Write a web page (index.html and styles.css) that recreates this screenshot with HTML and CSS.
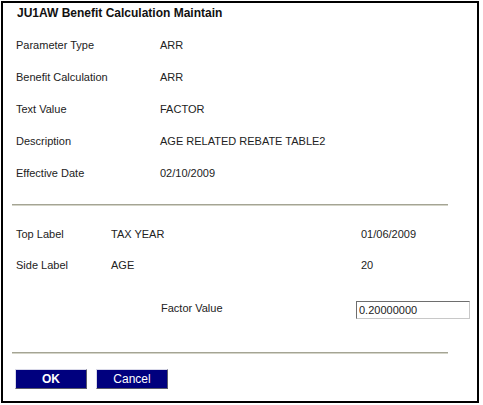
FILE: index.html
```html
<!DOCTYPE html>
<html lang="en">
<head>
  <title>JU1AW Benefit Calculation Maintain</title>
  <link rel="stylesheet" href="styles.css">
</head>
<body>
    <div class="frame">
        <div class="title">JU1AW Benefit Calculation Maintain</div>

        <div class="details">
            <div class="row"><span class="label">Parameter Type</span><span>ARR</span></div>
            <div class="row"><span class="label">Benefit Calculation</span><span>ARR</span></div>
            <div class="row"><span class="label">Text Value</span><span>FACTOR</span></div>
            <div class="row"><span class="label">Description</span><span>AGE RELATED REBATE TABLE2</span></div>
            <div class="row"><span class="label">Effective Date</span><span>02/10/2009</span></div>
        </div>

        <div class="divider"></div>

        <div class="axes">
            <div class="axis-row"><span class="axis-label">Top Label</span><span class="axis-name">TAX YEAR</span><span>01/06/2009</span></div>
            <div class="axis-row"><span class="axis-label">Side Label</span><span class="axis-name">AGE</span><span>20</span></div>
        </div>

        <div class="factor-row">
            <span class="factor-label">Factor Value</span>
            <input class="factor-input" value="0.20000000"/>
        </div>

        <div class="divider lower"></div>

        <div class="buttons">
            <button class="btn btn-ok">OK</button>
            <button class="btn">Cancel</button>
        </div>
    </div>
</body>
</html>
```

FILE: styles.css
```css
body {
    margin: 0;
    font-family: "Liberation Sans", Arial, sans-serif;
    font-size: 11px;
    color: #222;
    background: #fff;
}
.frame {
    box-sizing: border-box;
    width: 478px;
    height: 402px;
    margin: 1px;
    border: 2px solid #000;
}
.title {
    font-weight: bold;
    font-size: 12px;
    line-height: 20px;
    height: 20px;
    padding-left: 14px;
    color: #111;
}
.details {
    padding-left: 13px;
    margin-top: 6px;
}
.row {
    display: flex;
    align-items: center;
    height: 32px;
}
.label {
    width: 144px;
}
.divider {
    margin: 15px 29px 0 9px;
    height: 1px;
    border-top: 1px solid #a4a494;
    background: #d4d4c8;
}
.axes {
    padding-left: 13px;
    margin-top: 12px;
}
.axis-row {
    display: flex;
    align-items: center;
    height: 31px;
}
.axis-label {
    width: 95px;
}
.axis-name {
    width: 250px;
}
.factor-row {
    display: flex;
    align-items: center;
    height: 32px;
    padding-left: 158px;
    margin-top: 12px;
}
.factor-label {
    width: 195px;
}
.factor-input {
    box-sizing: border-box;
    width: 114px;
    height: 18px;
    margin: 3px 0 0 0;
    padding: 0 2px;
    border: 1px solid #c8c8c8;
    border-top-color: #6e6e6e;
    border-left-color: #6e6e6e;
    font-family: "Liberation Sans", Arial, sans-serif;
    font-size: 11px;
    color: #222;
}
.divider.lower {
    margin-top: 28px;
}
.buttons {
    display: flex;
    gap: 9px;
    padding-left: 12px;
    margin-top: 15px;
}
.btn {
    box-sizing: border-box;
    width: 72px;
    height: 20px;
    padding: 0;
    background: #00007e;
    color: #fff;
    font-family: "Liberation Sans", Arial, sans-serif;
    font-size: 12px;
    border: 1px solid;
    border-color: #d8d8e8 #5a5a6a #5a5a6a #d8d8e8;
}
.btn-ok {
    font-weight: bold;
}
```
